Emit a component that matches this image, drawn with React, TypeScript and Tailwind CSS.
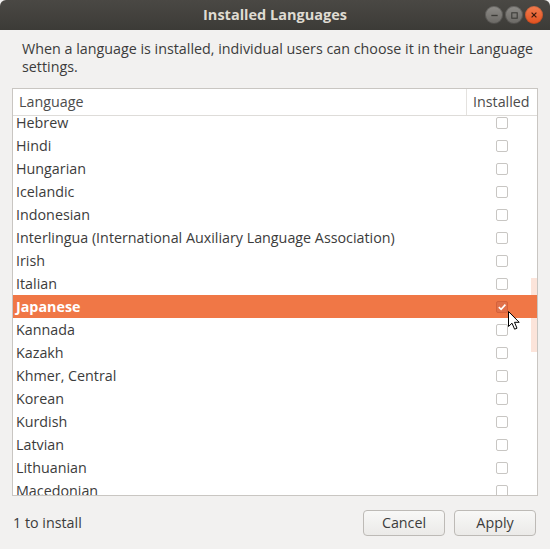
import React from "react";

const languages = [
  "Hebrew",
  "Hindi",
  "Hungarian",
  "Icelandic",
  "Indonesian",
  "Interlingua (International Auxiliary Language Association)",
  "Irish",
  "Italian",
  "Japanese",
  "Kannada",
  "Kazakh",
  "Khmer, Central",
  "Korean",
  "Kurdish",
  "Latvian",
  "Lithuanian",
  "Macedonian",
];

function Check({ checked }: { checked?: boolean }) {
  if (checked) {
    return (
      <span className="flex size-[12px] shrink-0 items-center justify-center rounded-[2px] border border-[#d5613a] bg-[#e0704a]">
        <svg viewBox="0 0 10 10" className="block size-[10px]">
          <path d="M1.8 5.2 L4.1 7.4 L8.4 2.6" fill="none" stroke="#fff" strokeWidth="1.6" />
        </svg>
      </span>
    );
  }
  return <span className="block size-[12px] shrink-0 rounded-[2px] border border-[#c8c6c3] bg-white" />;
}

function WinButton({ kind }: { kind: "min" | "max" | "close" }) {
  if (kind === "close") {
    return (
      <span className="flex size-[18px] items-center justify-center rounded-full bg-[linear-gradient(#f37d4f,#e2511f)] shadow-[inset_0_0_0_1px_rgba(0,0,0,0.15)]">
        <svg viewBox="0 0 10 10" className="size-[8px]">
          <path d="M2 2 L8 8 M8 2 L2 8" stroke="#3a1a0e" strokeWidth="1.5" />
        </svg>
      </span>
    );
  }
  return (
    <span className="flex size-[18px] items-center justify-center rounded-full bg-[linear-gradient(#8e8c88,#6a6864)] shadow-[inset_0_0_0_1px_rgba(0,0,0,0.25)]">
      <svg viewBox="0 0 10 10" className="size-[9px]">
        {kind === "min" ? (
          <path d="M1.5 5 H8.5" stroke="#3c3b37" strokeWidth="1.5" />
        ) : (
          <rect x="2" y="2" width="6" height="6" fill="none" stroke="#3c3b37" strokeWidth="1.2" />
        )}
      </svg>
    </span>
  );
}

export default function App() {
  return (
    <div
      className="flex h-[549px] w-[550px] flex-col bg-[#f2f1f0] text-[#3c3c3c]"
      style={{ fontFamily: '"Open Sans", "Noto Sans", sans-serif' }}
    >
      <div className="grid h-[30px] grid-cols-[1fr_auto_1fr] items-center rounded-t-[6px] bg-[linear-gradient(#4a4844,#3c3b37)]">
        <span />
        <span className="text-[14.5px] font-bold text-[#dfdbd2]">Installed Languages</span>
        <div className="flex items-center justify-end gap-[2px] pr-[7px]">
          <WinButton kind="min" />
          <WinButton kind="max" />
          <WinButton kind="close" />
        </div>
      </div>

      <p className="whitespace-nowrap px-[22px] pt-[10px] text-[14.3px] leading-[18px]">
        When a language is installed, individual users can choose it in their Language
        <br />
        settings.
      </p>

      <div className="mx-[12px] mt-[12px] flex h-[408px] w-[526px] flex-col overflow-hidden border border-[#c9c6c2] bg-white">
        <div className="flex h-[27px] shrink-0 items-center border-b border-[#dedcd9] text-[14.3px]">
          <span className="flex-1 pl-[6px] text-[#4c4c4c]">Language</span>
          <span className="h-full w-px bg-[#e4e2df]" />
          <span className="w-[70px] pl-[6px] text-[#4c4c4c]">Installed</span>
        </div>
        <div className="relative flex-1 overflow-hidden">
          <div className="-mt-[5px]">
            {languages.map((lang) => {
              const sel = lang === "Japanese";
              return (
                <div
                  key={lang}
                  className={
                    sel
                      ? "flex h-[23px] items-center bg-[#f07746] text-[14.3px] font-bold text-white"
                      : "flex h-[23px] items-center text-[14.3px]"
                  }
                >
                  <span className="flex-1 pl-[3px]">{lang}</span>
                  <span className="flex w-[70px] justify-center pr-[1px]">
                    <Check checked={sel} />
                  </span>
                </div>
              );
            })}
          </div>
          <div className="absolute right-0 top-[162px] h-[74px] w-[6px] bg-[#f07746]/20" />
          <svg viewBox="0 0 13 20" className="absolute left-[495px] top-[195px] h-[20px] w-[13px]">
            <path
              d="M0.5 0.5 L0.5 15.5 L4 12.2 L6.6 18.2 L9 17.2 L6.5 11.3 L11.2 11.3 Z"
              fill="#fff"
              stroke="#000"
              strokeWidth="1"
              strokeLinejoin="round"
            />
          </svg>
        </div>
      </div>

      <div className="flex flex-1 items-center justify-between pl-[13px] pr-[14px]">
        <span className="text-[14.3px]">1 to install</span>
        <div className="flex gap-[9px]">
          <button className="h-[26px] w-[82px] rounded-[4px] border border-[#bdbab6] bg-[linear-gradient(#f8f8f7,#ebeae8)] text-[14.3px] text-[#3c3c3c]">
            Cancel
          </button>
          <button className="h-[26px] w-[82px] rounded-[4px] border border-[#bdbab6] bg-[linear-gradient(#f8f8f7,#ebeae8)] text-[14.3px] text-[#3c3c3c]">
            Apply
          </button>
        </div>
      </div>
    </div>
  );
}
